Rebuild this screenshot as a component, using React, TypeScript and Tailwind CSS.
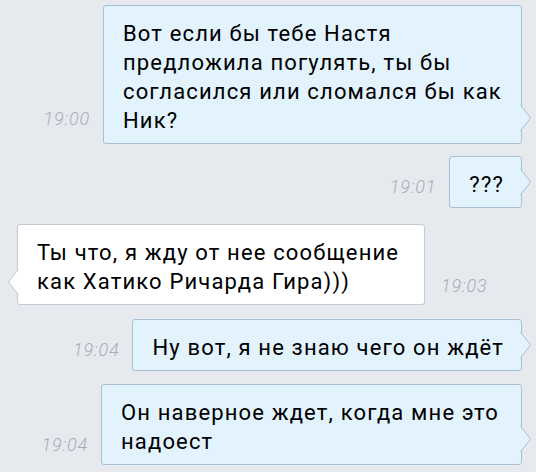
const font = { fontFamily: "Roboto, 'Noto Sans', sans-serif" };

type Msg = {
  text: string;
  time: string;
  out: boolean;
  width?: string;
  mt: string;
  timeMb: string;
};

const messages: Msg[] = [
  {
    text: "Вот если бы тебе Настя предложила погулять, ты бы согласился или сломался бы как Ник?",
    time: "19:00",
    out: true,
    width: "w-[419px]",
    mt: "mt-[5px]",
    timeMb: "mb-[16px]",
  },
  { text: "???", time: "19:01", out: true, mt: "mt-[12px]", timeMb: "mb-[12px]" },
  {
    text: "Ты что, я жду от нее сообщение как Хатико Ричарда Гира)))",
    time: "19:03",
    out: false,
    width: "w-[408px]",
    mt: "mt-[16px]",
    timeMb: "mb-[10px]",
  },
  { text: "Ну вот, я не знаю чего он ждёт", time: "19:04", out: true, mt: "mt-[14px]", timeMb: "mb-[12px]" },
  {
    text: "Он наверное ждет, когда мне это надоест",
    time: "19:04",
    out: true,
    width: "w-[421px]",
    mt: "mt-[13px]",
    timeMb: "mb-[11px]",
  },
];

function Tail({ out }: { out: boolean }) {
  const fill = out ? "#e2f3fd" : "#ffffff";
  const stroke = out ? "#a7c0d6" : "#c3cad2";
  if (out) {
    return (
      <svg className="absolute left-[calc(100%-1px)] bottom-[12px]" width="12" height="26" viewBox="0 0 12 26">
        <polygon points="0,0 10.5,13 0,26" fill={fill} />
        <polyline points="0.5,0 10.5,13 0.5,26" fill="none" stroke={stroke} strokeWidth="1" />
      </svg>
    );
  }
  return (
    <svg className="absolute right-[calc(100%-1px)] bottom-[9px]" width="12" height="26" viewBox="0 0 12 26">
      <polygon points="12,0 1.5,13 12,26" fill={fill} />
      <polyline points="11.5,0 1.5,13 11.5,26" fill="none" stroke={stroke} strokeWidth="1" />
    </svg>
  );
}

function Row({ m }: { m: Msg }) {
  const time = (
    <span className={`text-[18px] leading-[18px] tracking-[0.8px] italic font-light text-[#a6adb6] ${m.timeMb}`}>
      {m.time}
    </span>
  );
  const bubble = (
    <div
      className={`relative rounded-[3px] border pl-[19px] pr-[17px] pt-[13px] pb-[8px] text-[22px] leading-[29px] tracking-[1.15px] text-black ${
        m.width ?? ""
      } ${m.out ? "bg-[#e2f3fd] border-[#a7c0d6]" : "bg-white border-[#c3cad2]"}`}
    >
      {m.text}
      <Tail out={m.out} />
    </div>
  );
  return m.out ? (
    <div className={`flex items-end justify-end gap-[13px] pr-[14px] ${m.mt}`}>
      {time}
      {bubble}
    </div>
  ) : (
    <div className={`flex items-end gap-[16px] pl-[17px] ${m.mt}`}>
      {bubble}
      {time}
    </div>
  );
}

export default function App() {
  return (
    <div className="w-[536px] h-[472px] overflow-hidden bg-[#e6eaee]" style={font}>
      {messages.map((m, i) => (
        <Row key={i} m={m} />
      ))}
    </div>
  );
}
